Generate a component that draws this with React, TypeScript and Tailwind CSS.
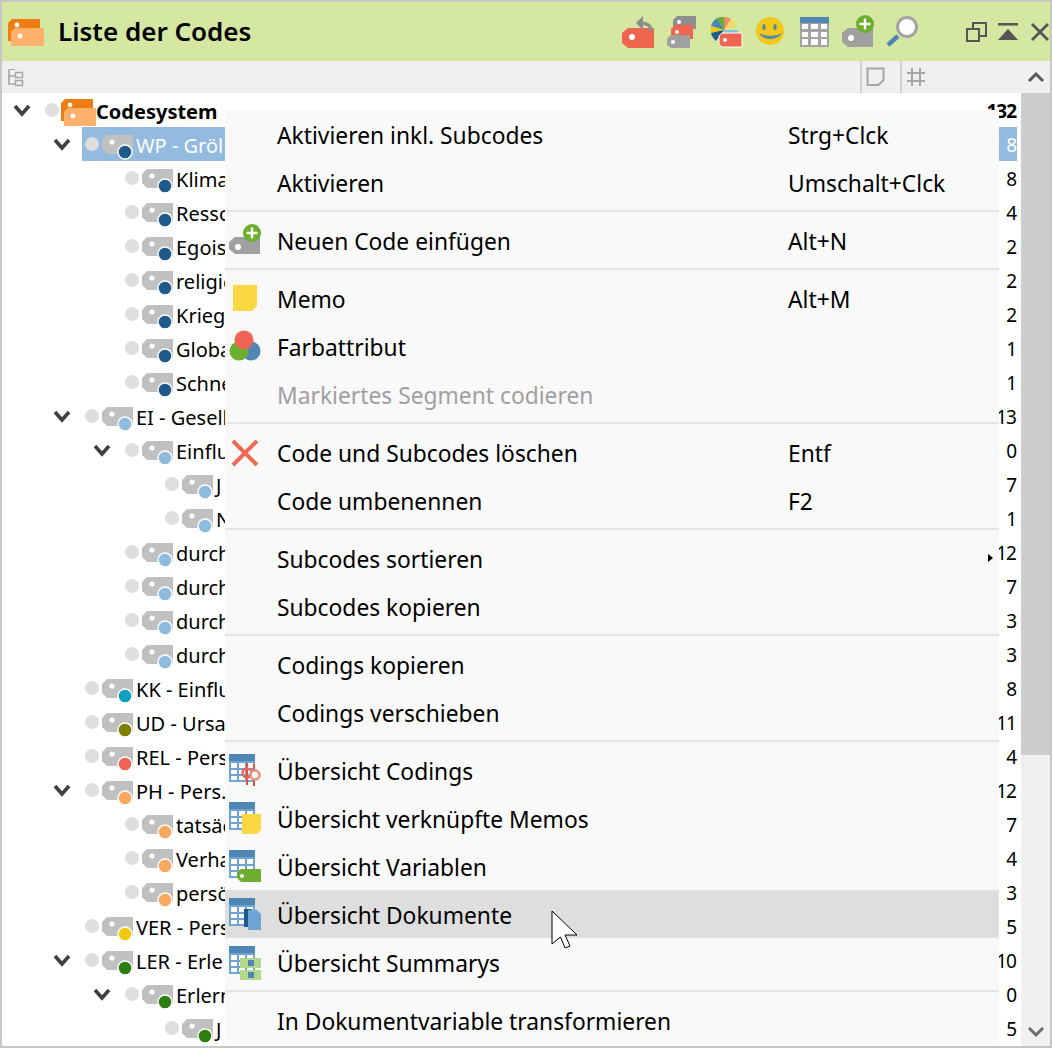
import type { ReactNode } from "react";

type TreeItem = { level: number; label: string; count: string; dot: string; open?: boolean };

const DARK = "#1f5a8c";
const LIGHT = "#8fbbdf";

const treeItems: TreeItem[] = [
  { level: 1, label: "Klima", count: "8", dot: DARK },
  { level: 1, label: "Resso", count: "4", dot: DARK },
  { level: 1, label: "Egois", count: "2", dot: DARK },
  { level: 1, label: "religic", count: "2", dot: DARK },
  { level: 1, label: "Krieg", count: "2", dot: DARK },
  { level: 1, label: "Globa", count: "1", dot: DARK },
  { level: 1, label: "Schne", count: "1", dot: DARK },
  { level: 0, label: "EI - Gesell", count: "13", dot: LIGHT, open: true },
  { level: 1, label: "Einflu", count: "0", dot: LIGHT, open: true },
  { level: 2, label: "J", count: "7", dot: LIGHT },
  { level: 2, label: "N", count: "1", dot: LIGHT },
  { level: 1, label: "durch", count: "12", dot: LIGHT },
  { level: 1, label: "durch", count: "7", dot: LIGHT },
  { level: 1, label: "durch", count: "3", dot: LIGHT },
  { level: 1, label: "durch", count: "3", dot: LIGHT },
  { level: 0, label: "KK - Einflu", count: "8", dot: "#0f9fc4" },
  { level: 0, label: "UD - Ursa", count: "11", dot: "#7f7f00" },
  { level: 0, label: "REL - Pers", count: "4", dot: "#ef6352" },
  { level: 0, label: "PH - Pers.", count: "12", dot: "#f9a860", open: true },
  { level: 1, label: "tatsäc", count: "7", dot: "#f9a860" },
  { level: 1, label: "Verha", count: "4", dot: "#f9a860" },
  { level: 1, label: "persö", count: "3", dot: "#f9a860" },
  { level: 0, label: "VER - Pers", count: "5", dot: "#f2c80f" },
  { level: 0, label: "LER - Erle", count: "10", dot: "#2c7d12", open: true },
  { level: 1, label: "Erlern", count: "0", dot: "#2c7d12", open: true },
  { level: 2, label: "J", count: "5", dot: "#2c7d12" },
];

const indents = ["pl-[48px]", "pl-[88px]", "pl-[128px]"];

function Chevron() {
  return (
    <svg viewBox="0 0 24 34" className="w-6 h-[34px] shrink-0">
      <polyline points="5,13 12,21 19,13" fill="none" stroke="#404040" strokeWidth="3.6" />
    </svg>
  );
}

function Tag({ dot }: { dot: string }) {
  return (
    <svg viewBox="0 0 32 34" className="w-8 h-[34px] shrink-0 overflow-visible">
      <polygon points="5,8 31,8 31,27 5,27 0,22 0,13" fill="#c0c0c0" />
      <circle cx="10" cy="15" r="2.6" fill="#fff" />
      <circle cx="23" cy="25" r="7" fill={dot} stroke="#fff" strokeWidth="1.4" />
    </svg>
  );
}

function StatusDot() {
  return <span className="w-[14px] h-[14px] rounded-full bg-[#dedede] shrink-0" />;
}

function Count({ children, bold }: { children: ReactNode; bold?: boolean }) {
  return (
    <span className={`ml-auto pt-[3px] pr-px text-[19px] tracking-[-1px] ${bold ? "font-bold" : ""}`}>
      {children}
    </span>
  );
}

function TreeRow({ item }: { item: TreeItem }) {
  return (
    <div className={`flex items-center h-[34px] pr-1 ${indents[item.level]}`}>
      <div className="w-8 shrink-0">{item.open && <Chevron />}</div>
      <div className="flex flex-1 items-center pl-[3px]">
        <StatusDot />
        <div className="ml-[3px]">
          <Tag dot={item.dot} />
        </div>
        <span className="ml-[2px] pt-[3px] whitespace-nowrap">{item.label}</span>
        <Count>{item.count}</Count>
      </div>
    </div>
  );
}

function FoldersIcon({ view, size }: { view: string; size: string }) {
  return (
    <svg viewBox={view} className={size}>
      <path d="M4 0H32V22H0V4Z" fill="#f07d14" />
      <path d="M7 9H36V27H3V13Z" fill="#ffb06a" />
      <circle cx="9" cy="6" r="2.4" fill="#fff" />
      <circle cx="12" cy="17" r="2.4" fill="#fff" />
    </svg>
  );
}

function HeaderIcons() {
  return (
    <div className="flex ml-auto">
      <svg viewBox="618 2 46 59" className="w-[46px] h-[59px]">
        <path d="M628 28H654V48H628L622 43V33Z" fill="#f0654f" />
        <circle cx="632" cy="37" r="3" fill="#fff" />
        <path d="M651 31C651 25 646 23 641 23" fill="none" stroke="#8c8c8c" strokeWidth="3.5" />
        <polygon points="643,16 636,23 643,30" fill="#8c8c8c" />
      </svg>
      <svg viewBox="664 2 42 59" className="w-[42px] h-[59px]">
        <path d="M677 16H696V29H677L673 26V20Z" fill="#8f8f8f" />
        <circle cx="679" cy="22" r="2" fill="#fff" />
        <path d="M675 25H693V39H675L671 36V29Z" fill="#f0654f" />
        <circle cx="677" cy="32" r="2" fill="#fff" />
        <path d="M671 35H690V48H671L667 45V39Z" fill="#a0a0a0" />
        <circle cx="673" cy="42" r="2" fill="#fff" />
      </svg>
      <svg viewBox="706 2 44 59" className="w-[44px] h-[59px]">
        <path d="M724 30L724 17A14 14 0 0 1 731 19Z" fill="#f08a6c" />
        <path d="M724 30L731 19A14 14 0 0 1 737 27Z" fill="#f2d96a" />
        <path d="M724 30L717 18A14 14 0 0 1 724 17Z" fill="#6cae2d" />
        <path d="M724 30L717 18A14 14 0 0 0 711 26Z" fill="#4f86b3" />
        <path d="M724 30L711 26A14 14 0 0 0 711 33Z" fill="#f2c80f" />
        <path d="M724 30L711 33A14 14 0 0 0 716 41Z" fill="#1f5a8c" />
        <path d="M724 30H738V33H724Z" fill="#7cc4e8" />
        <path d="M722 33H742V47H722L719 44V36Z" fill="#f0654f" stroke="#fff" strokeWidth="1" />
        <circle cx="725" cy="40" r="2" fill="#fff" />
      </svg>
      <svg viewBox="750 2 46 59" className="w-[46px] h-[59px]">
        <circle cx="770" cy="31" r="14" fill="#f1c719" />
        <ellipse cx="764" cy="27" rx="1.6" ry="3" fill="#4f86b3" />
        <ellipse cx="775" cy="27" rx="1.6" ry="3" fill="#4f86b3" />
        <path d="M760 34C764 40 776 40 781 34C776 37 765 37 760 34Z" fill="#4f86b3" stroke="#4f86b3" />
      </svg>
      <svg viewBox="796 2 42 59" className="w-[42px] h-[59px]">
        <rect x="800" y="17" width="29" height="30" fill="#a3a3a3" />
        <rect x="800" y="17" width="29" height="6" fill="#4f86b3" />
        <path d="M802 24H808V29H802ZM811 24H818V29H811ZM821 24H827V29H821ZM802 32H808V37H802ZM811 32H818V37H811ZM821 32H827V37H821ZM802 39H808V45H802ZM811 39H818V45H811ZM821 39H827V45H821Z" fill="#fff" />
      </svg>
      <svg viewBox="838 2 46 59" className="w-[46px] h-[59px]">
        <path d="M848 28H873V47H848L842 42V33Z" fill="#a0a0a0" />
        <circle cx="851" cy="38" r="3" fill="#fff" />
        <circle cx="865" cy="24" r="9" fill="#6cae2d" />
        <path d="M865 18.5V29.5M859.5 24H870.5" stroke="#fff" strokeWidth="2.4" />
      </svg>
      <svg viewBox="884 2 78 59" className="w-[78px] h-[59px]">
        <path d="M888 45L898 36" stroke="#4f86b3" strokeWidth="4.5" />
        <circle cx="907" cy="27" r="9.5" fill="#fff" stroke="#a3a3a3" strokeWidth="3" />
      </svg>
      <svg viewBox="962 2 30 59" className="w-[30px] h-[59px]">
        <rect x="973" y="23" width="13" height="13" fill="none" stroke="#555" strokeWidth="2" />
        <rect x="967" y="29" width="12" height="12" fill="#d4e8a2" stroke="#555" strokeWidth="2" />
      </svg>
      <svg viewBox="992 2 32 59" className="w-8 h-[59px]">
        <rect x="998" y="23" width="20" height="2.5" fill="#555" />
        <polygon points="998,40 1008,29 1018,40" fill="#555" />
      </svg>
      <svg viewBox="1024 2 26 59" className="w-[26px] h-[59px]">
        <path d="M1032 24L1048 40M1048 24L1032 40" stroke="#555" strokeWidth="2.8" />
      </svg>
    </div>
  );
}

function ColumnBar() {
  return (
    <div className="flex h-8 bg-[#efefef]">
      <svg viewBox="2 61 30 32" className="w-[30px] h-8">
        <path d="M9 69V84H16M9 76H16" fill="none" stroke="#a6a6a6" strokeWidth="1.6" />
        <rect x="9" y="69" width="6" height="1" fill="#a6a6a6" />
        <rect x="15.5" y="72.5" width="7" height="5" fill="none" stroke="#a6a6a6" strokeWidth="1.5" />
        <rect x="15.5" y="80.5" width="7" height="5" fill="none" stroke="#a6a6a6" strokeWidth="1.5" />
      </svg>
      <div className="ml-auto flex">
        <div className="w-10 border-l-2 border-[#cfcfcf] flex items-center pl-[4px]">
          <svg viewBox="0 0 20 20" className="w-5 h-5">
            <path d="M1.5 1.5H17.5V13L12.5 18H1.5Z" fill="none" stroke="#a6a6a6" strokeWidth="2" />
          </svg>
        </div>
        <div className="w-[121px] border-l-2 border-[#cfcfcf] flex items-center pl-[4px]">
          <svg viewBox="0 0 20 20" className="w-5 h-5">
            <path d="M6 1V19M14 1V19M1 6H19M1 14H19" fill="none" stroke="#a6a6a6" strokeWidth="2" />
          </svg>
        </div>
        <div className="w-[29px] flex items-center justify-center">
          <svg viewBox="0 0 18 12" className="w-[18px] h-3">
            <polyline points="2,10 9,3 16,10" fill="none" stroke="#5a5a5a" strokeWidth="3" />
          </svg>
        </div>
      </div>
    </div>
  );
}

function Scrollbar() {
  return (
    <div className="w-[29px] bg-[#f0f0f0] flex flex-col">
      <div className="h-[662px] bg-[#cdcdcd]" />
      <div className="mt-auto h-7 flex items-center justify-center">
        <svg viewBox="0 0 18 12" className="w-[18px] h-3">
          <polyline points="2,2 9,9 16,2" fill="none" stroke="#6a6a6a" strokeWidth="3" />
        </svg>
      </div>
    </div>
  );
}

function MenuIcon({ children }: { children?: ReactNode }) {
  return (
    <svg viewBox="0 0 52 48" className="w-[52px] h-12 shrink-0">
      {children}
    </svg>
  );
}

function TableBase() {
  return (
    <>
      <rect x="4" y="8" width="26" height="28" fill="#6fa5d4" />
      <rect x="4" y="8" width="26" height="7" fill="#4f86b3" />
      <path d="M6 17H12V22H6ZM14 17H20V22H14ZM22 17H28V22H22ZM6 24H12V28H6ZM14 24H20V28H14ZM22 24H28V28H22ZM6 30H12V34H6ZM14 30H20V34H14ZM22 30H28V34H22Z" fill="#fff" />
    </>
  );
}

function MenuItem({
  icon,
  label,
  shortcut,
  disabled,
  hover,
  arrow,
}: {
  icon?: ReactNode;
  label: string;
  shortcut?: string;
  disabled?: boolean;
  hover?: boolean;
  arrow?: boolean;
}) {
  return (
    <div className={`relative flex items-center h-12 text-[22.8px] ${hover ? "bg-[#dedede]" : ""} ${disabled ? "text-[#a0a0a0]" : "text-black"}`}>
      <MenuIcon>{icon}</MenuIcon>
      <span className="w-[511px] pt-1 whitespace-nowrap">{label}</span>
      {shortcut && <span className="pt-1 whitespace-nowrap">{shortcut}</span>}
      {arrow && (
        <span className="absolute right-[6px] top-[20px] border-y-[4px] border-l-[5px] border-y-transparent border-l-black" />
      )}
    </div>
  );
}

function Sep() {
  return (
    <div className="h-[10px] pt-1">
      <div className="h-0.5 bg-[#e6e6e6]" />
    </div>
  );
}

function ContextMenu() {
  return (
    <div className="absolute left-[223px] top-[108px] bottom-0 w-[774px] bg-[#f9f9f9] overflow-hidden">
      <MenuItem label="Aktivieren inkl. Subcodes" shortcut="Strg+Clck" />
      <MenuItem label="Aktivieren" shortcut="Umschalt+Clck" />
      <Sep />
      <MenuItem
        label="Neuen Code einfügen"
        shortcut="Alt+N"
        icon={
          <>
            <path d="M10 21H35V38H10L4 33V26Z" fill="#a0a0a0" />
            <circle cx="13" cy="31" r="3" fill="#fff" />
            <circle cx="27" cy="17" r="9" fill="#6cae2d" />
            <path d="M27 11.5V22.5M21.5 17H32.5" stroke="#fff" strokeWidth="2.4" />
          </>
        }
      />
      <Sep />
      <MenuItem
        label="Memo"
        shortcut="Alt+M"
        icon={<path d="M8 11H32V32L27 37H8Z" fill="#fbd743" />}
      />
      <MenuItem
        label="Farbattribut"
        icon={
          <>
            <circle cx="26" cy="29" r="9.5" fill="#4f86b3" />
            <circle cx="14" cy="29" r="9.5" fill="#6cae2d" />
            <circle cx="19" cy="18" r="9.5" fill="#ef6352" />
          </>
        }
      />
      <MenuItem label="Markiertes Segment codieren" disabled />
      <Sep />
      <MenuItem
        label="Code und Subcodes löschen"
        shortcut="Entf"
        icon={<path d="M8 13L32 37M32 13L8 37" stroke="#ef6a55" strokeWidth="4" />}
      />
      <MenuItem label="Code umbenennen" shortcut="F2" />
      <Sep />
      <MenuItem label="Subcodes sortieren" arrow />
      <MenuItem label="Subcodes kopieren" />
      <Sep />
      <MenuItem label="Codings kopieren" />
      <MenuItem label="Codings verschieben" />
      <Sep />
      <MenuItem
        label="Übersicht Codings"
        icon={
          <>
            <TableBase />
            <path d="M22 17V39M29 18V40" stroke="#e0503c" strokeWidth="2" />
            <circle cx="22" cy="27" r="4.5" fill="none" stroke="#ef6352" strokeWidth="2.4" />
            <circle cx="30" cy="29" r="4.5" fill="#f9f9f9" stroke="#f08a78" strokeWidth="2.4" />
          </>
        }
      />
      <MenuItem
        label="Übersicht verknüpfte Memos"
        icon={
          <>
            <TableBase />
            <path d="M17 20H36V36L32 40H17Z" fill="#fbd743" />
          </>
        }
      />
      <MenuItem
        label="Übersicht Variablen"
        icon={
          <>
            <TableBase />
            <path d="M16 27H36V40H16L12 36V31Z" fill="#6cae2d" />
            <circle cx="17" cy="34" r="2" fill="#fff" />
          </>
        }
      />
      <MenuItem
        label="Übersicht Dokumente"
        hover
        icon={
          <>
            <TableBase />
            <rect x="19" y="19" width="8" height="18" fill="#1f5a8c" />
            <path d="M23 20H32L36 24V40H23Z" fill="#6fa5d4" />
          </>
        }
      />
      <MenuItem
        label="Übersicht Summarys"
        icon={
          <>
            <TableBase />
            <rect x="15" y="20" width="21" height="10" fill="#b2d88a" />
            <rect x="15" y="32" width="21" height="10" fill="#b2d88a" />
            <rect x="23" y="22" width="6" height="6" fill="#4f86b3" />
            <rect x="23" y="34" width="6" height="6" fill="#4f86b3" />
          </>
        }
      />
      <Sep />
      <MenuItem label="In Dokumentvariable transformieren" />
    </div>
  );
}

function Cursor() {
  return (
    <svg viewBox="0 0 28 40" className="absolute left-[549px] top-[908px] w-7 h-10">
      <polygon
        points="1,1 1,34 9.5,27 14,38 19,36 14,25 26,25"
        fill="#fff"
        stroke="#000"
        strokeWidth="1"
      />
    </svg>
  );
}

export default function App() {
  return (
    <div className="relative w-[1052px] h-[1048px] border-2 border-[#c6c6c6] bg-white overflow-hidden font-['Noto_Sans','Open_Sans',sans-serif] text-[20px] text-black">
      <div className="flex items-center h-[59px] bg-[#d4e8a2]">
        <FoldersIcon view="-6 -17 56 59" size="w-14 h-[59px]" />
        <h1 className="text-[26px] font-semibold whitespace-nowrap">Liste der Codes</h1>
        <HeaderIcons />
      </div>
      <ColumnBar />
      <div className="flex h-[953px]">
        <div className="flex-1 overflow-hidden">
          <div className="flex items-center h-[34px] pr-1 pl-2">
            <div className="w-8 shrink-0">
              <Chevron />
            </div>
            <div className="flex flex-1 items-center pl-[3px]">
              <StatusDot />
              <FoldersIcon view="-2 -6 37 34" size="w-[37px] h-[34px] shrink-0" />
              <span className="font-bold pt-[3px]">Codesystem</span>
              <Count bold>132</Count>
            </div>
          </div>
          <div className="flex items-center h-[34px] pr-1 pl-12">
            <div className="w-8 shrink-0">
              <Chevron />
            </div>
            <div className="flex flex-1 items-center pl-[3px] bg-[#92bbdf] text-white h-[34px]">
              <StatusDot />
              <div className="ml-[3px]">
                <Tag dot={DARK} />
              </div>
              <span className="ml-[2px] pt-[3px]">WP - Gröl</span>
              <Count>8</Count>
            </div>
          </div>
          {treeItems.map((item, i) => (
            <TreeRow key={i} item={item} />
          ))}
        </div>
        <Scrollbar />
      </div>
      <ContextMenu />
      <Cursor />
    </div>
  );
}
